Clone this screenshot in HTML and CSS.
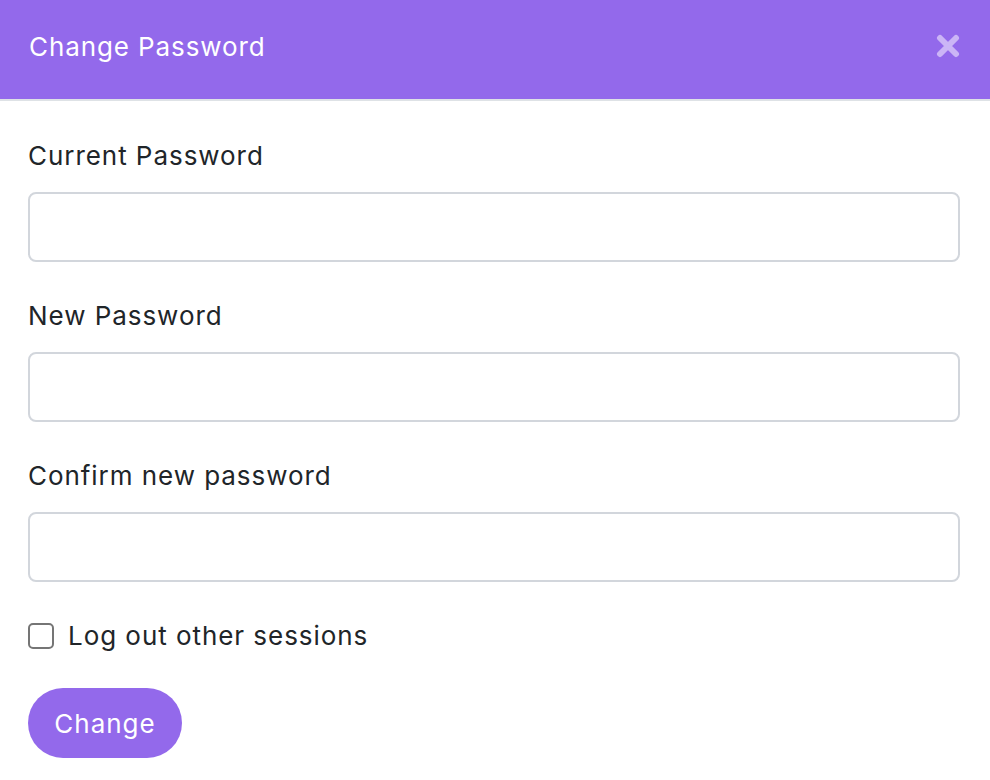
FILE: index.html
```html
<!DOCTYPE html>
<html>
<head>
<meta charset="utf-8">
<link rel="stylesheet" href="styles.css">
</head>
<body>
<div class="modal">
  <header class="modal-header">
    <h1 class="modal-title">Change Password</h1>
    <button class="close" aria-label="Close">
      <svg width="24" height="24" viewBox="0 0 24 24"><path d="M4 4 L20 20 M20 4 L4 20" stroke="#cbb5f6" stroke-width="6" stroke-linecap="round" fill="none"/></svg>
    </button>
  </header>
  <form class="modal-body">
    <div class="group">
      <label class="label">Current Password</label>
      <input class="input" type="password">
    </div>
    <div class="group">
      <label class="label">New Password</label>
      <input class="input" type="password">
    </div>
    <div class="group">
      <label class="label">Confirm new password</label>
      <input class="input" type="password">
    </div>
    <label class="check">
      <span class="box"></span>
      <span>Log out other sessions</span>
    </label>
    <button type="button" class="btn">Change</button>
  </form>
</div>
</body>
</html>
```
FILE: styles.css
```css
* { box-sizing: border-box; }
html, body { margin: 0; background: #fff; }
body {
  font-family: Inter, "Noto Sans", sans-serif;
  color: #212529;
  letter-spacing: 0.95px;
}
.modal-header {
  height: 101px;
  background: #9369eb;
  border-bottom: 2px solid #dee2e6;
  display: flex;
  align-items: center;
  justify-content: space-between;
  padding: 0 30px 0 29px;
}
.modal-title {
  margin: 0;
  font-size: 26px;
  font-weight: 400;
  color: #fff;
  line-height: 1;
  padding-bottom: 6px;
  letter-spacing: 0.9px;
}
.close {
  background: none;
  border: 0;
  padding: 0;
  display: flex;
  margin-bottom: 8px;
}
.modal-body {
  padding: 35px 30px 0 28px;
  display: flex;
  flex-direction: column;
}
.group {
  display: flex;
  flex-direction: column;
  margin-bottom: 34px;
}
.label {
  font-size: 26px;
  line-height: 39px;
  margin: 0 0 17px 0;
}
.input {
  height: 70px;
  border: 2px solid #d2d6dc;
  border-radius: 8px;
  width: 100%;
}
.check {
  display: flex;
  align-items: center;
  font-size: 26px;
  line-height: 39px;
  gap: 14px;
  margin-bottom: 33px;
}
.box {
  width: 26px;
  height: 26px;
  border: 2px solid #757575;
  border-radius: 5px;
  flex: none;
}
.btn {
  align-self: flex-start;
  height: 70px;
  width: 154px;
  border: 0;
  border-radius: 35px;
  background: #9369eb;
  color: #fff;
  font-family: Inter, "Noto Sans", sans-serif;
  font-size: 26px;
  font-weight: 400;
  letter-spacing: 1px;
  padding: 0;
}
```
